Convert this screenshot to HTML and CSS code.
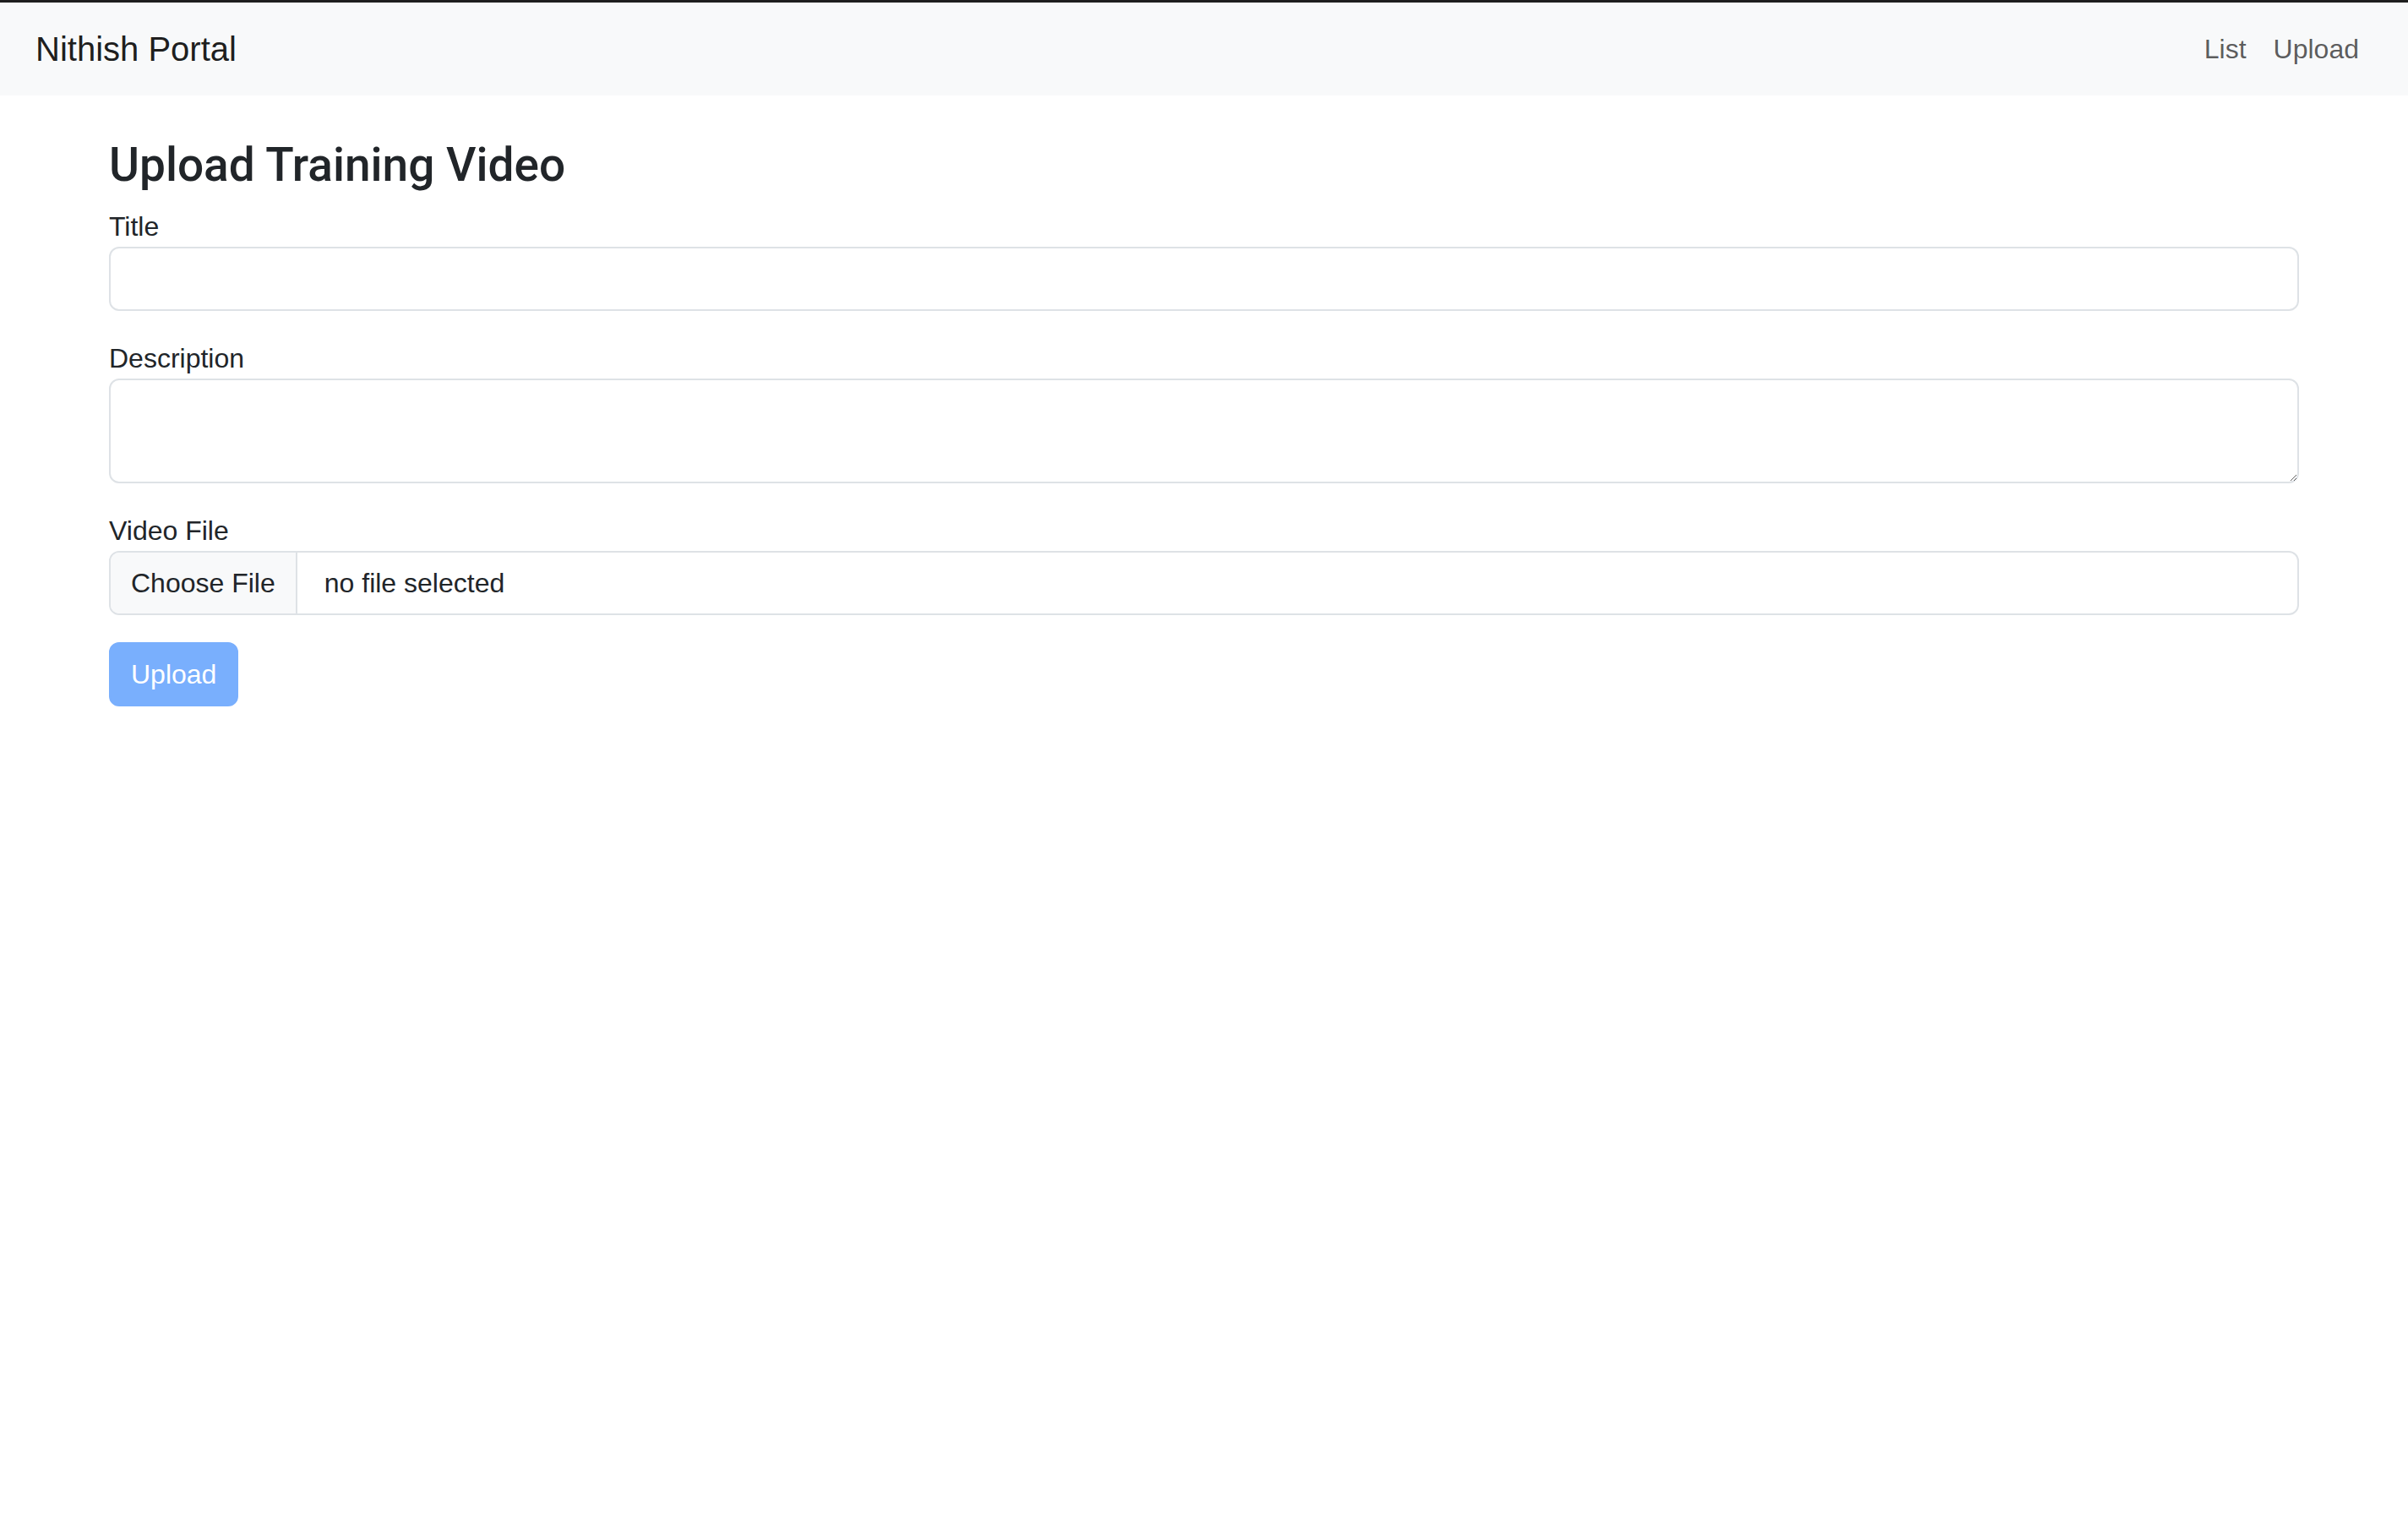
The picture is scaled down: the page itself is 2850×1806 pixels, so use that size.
FILE: index.html
```html
<!DOCTYPE html>
<html lang="en">
<head>
<meta charset="utf-8">
<title>Nithish Portal</title>
<link rel="stylesheet" href="styles.css">
</head>
<body>
<div class="topline"></div>
<nav class="navbar">
  <div class="nav-inner">
    <a class="brand" href="#">Nithish Portal</a>
    <ul class="nav-links">
      <li><a class="nav-link" href="#">List</a></li>
      <li><a class="nav-link" href="#">Upload</a></li>
    </ul>
  </div>
</nav>
<main class="container">
  <h3 class="page-title">Upload Training Video</h3>
  <form class="form">
    <div class="field">
      <label class="form-label" for="title">Title</label>
      <input class="form-control" id="title" type="text">
    </div>
    <div class="field">
      <label class="form-label" for="desc">Description</label>
      <textarea class="form-control textarea" id="desc" rows="2"></textarea>
    </div>
    <div class="field">
      <label class="form-label">Video File</label>
      <div class="file-control">
        <span class="file-btn">Choose File</span>
        <span class="file-name">no file selected</span>
      </div>
    </div>
    <button class="btn-primary" type="button">Upload</button>
  </form>
</main>
</body>
</html>
```
FILE: styles.css
```css
* { box-sizing: border-box; }
html, body {
  margin: 0;
  padding: 0;
  background: #ffffff;
  font-family: "Liberation Sans", Arial, sans-serif;
  font-size: 32px;
  line-height: 1.5;
  color: #212529;
}
.topline {
  height: 3px;
  background: #1e1e1e;
}
.navbar {
  background: #f8f9fa;
  height: 110px;
  display: flex;
  align-items: center;
}
.nav-inner {
  width: 100%;
  padding: 0 42px 0 42px;
  display: flex;
  align-items: center;
  justify-content: space-between;
}
.brand {
  font-size: 40px;
  line-height: 60px;
  padding: 10px 0;
  color: rgba(0, 0, 0, 0.9);
  text-decoration: none;
}
.nav-links {
  list-style: none;
  margin: 0;
  padding: 0;
  display: flex;
}
.nav-link {
  display: block;
  padding: 16px 16px;
  font-size: 32px;
  line-height: 48px;
  color: rgba(0, 0, 0, 0.65);
  text-decoration: none;
}
.container {
  width: 2640px;
  margin: 49px auto 0;
  padding: 0 24px;
}
.page-title {
  margin: 0 0 16px;
  font-family: Roboto, "Liberation Sans", sans-serif;
  font-size: 55px;
  font-weight: 500;
  line-height: 1.2;
  color: #212529;
}
.form { margin: 0; }
.field { margin-bottom: 32px; }
.form-label {
  display: block;
  margin-bottom: 0;
  font-size: 32px;
  line-height: 48px;
}
.form-control {
  display: block;
  width: 100%;
  height: 76px;
  padding: 12px 24px;
  font-family: inherit;
  font-size: 32px;
  line-height: 48px;
  color: #212529;
  background: #ffffff;
  border: 2px solid #dee2e6;
  border-radius: 12px;
  outline: none;
}
.textarea {
  height: 124px;
  resize: vertical;
}
.file-control {
  display: flex;
  align-items: stretch;
  height: 76px;
  border: 2px solid #dee2e6;
  border-radius: 12px;
  overflow: hidden;
  background: #ffffff;
}
.file-btn {
  display: flex;
  align-items: center;
  padding: 0 24px;
  background: #f8f9fa;
  border-right: 2px solid #dee2e6;
  line-height: 48px;
}
.file-name {
  display: flex;
  align-items: center;
  padding-left: 32px;
  line-height: 48px;
}
.btn-primary {
  display: inline-block;
  height: 76px;
  padding: 12px 24px;
  font-family: inherit;
  font-size: 32px;
  line-height: 48px;
  color: #ffffff;
  background: #0d6efd;
  border: 2px solid #0d6efd;
  border-radius: 12px;
  opacity: 0.55;
  cursor: default;
}
```
